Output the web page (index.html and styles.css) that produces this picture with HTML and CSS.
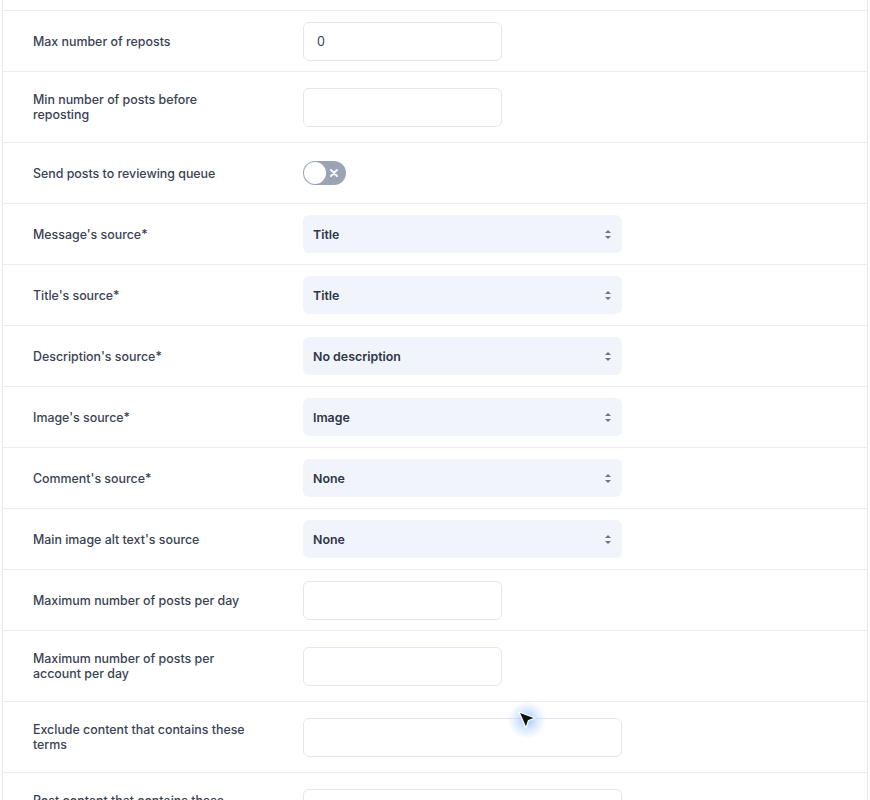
FILE: index.html
```html
<!DOCTYPE html>
<html>
<head>
<meta charset="utf-8">
<link rel="stylesheet" href="styles.css">
</head>
<body>
<div class="page">
  <div class="card">
    <div class="row-stub"></div>
    <div class="row">
      <div class="label">Max number of reposts</div>
      <div class="input">0</div>
    </div>
    <div class="row">
      <div class="label">Min number of posts before reposting</div>
      <div class="input"></div>
    </div>
    <div class="row">
      <div class="label">Send posts to reviewing queue</div>
      <div class="toggle"><span class="knob"></span>
        <svg class="x" width="8" height="8" viewBox="0 0 8 8"><path d="M1 1 L7 7 M7 1 L1 7" stroke="#fff" stroke-width="1.8" stroke-linecap="round"/></svg>
      </div>
    </div>
    <div class="row">
      <div class="label">Message's source*</div>
      <div class="select">Title<span class="arrows"></span></div>
    </div>
    <div class="row">
      <div class="label">Title's source*</div>
      <div class="select">Title<span class="arrows"></span></div>
    </div>
    <div class="row">
      <div class="label">Description's source*</div>
      <div class="select">No description<span class="arrows"></span></div>
    </div>
    <div class="row">
      <div class="label">Image's source*</div>
      <div class="select">Image<span class="arrows"></span></div>
    </div>
    <div class="row">
      <div class="label">Comment's source*</div>
      <div class="select">None<span class="arrows"></span></div>
    </div>
    <div class="row">
      <div class="label">Main image alt text's source</div>
      <div class="select">None<span class="arrows"></span></div>
    </div>
    <div class="row">
      <div class="label">Maximum number of posts per day</div>
      <div class="input"></div>
    </div>
    <div class="row">
      <div class="label">Maximum number of posts per account per day</div>
      <div class="input"></div>
    </div>
    <div class="row">
      <div class="label">Exclude content that contains these terms</div>
      <div class="input wide"></div>
    </div>
    <div class="row">
      <div class="label">Post content that contains these terms</div>
      <div class="input wide"></div>
    </div>
  </div>
  <svg class="cursor" width="40" height="40" viewBox="0 0 40 40">
    <defs>
      <radialGradient id="glow">
        <stop offset="0" stop-color="#7db4ff" stop-opacity="0.75"/>
        <stop offset="0.6" stop-color="#9cc7ff" stop-opacity="0.3"/>
        <stop offset="1" stop-color="#9cc7ff" stop-opacity="0"/>
      </radialGradient>
    </defs>
    <circle cx="19" cy="19" r="19" fill="url(#glow)"/>
    <path d="M11 11 L27 17 L20.5 19.5 L18 27 Z" fill="#111" stroke="#fff" stroke-width="1.2" stroke-linejoin="round"/>
  </svg>
</div>
</body>
</html>
```
FILE: styles.css
```css
* { box-sizing: border-box; }
html, body { margin: 0; padding: 0; background: #fff; }
body {
  font-family: Inter, "Noto Sans", sans-serif;
  color: #374151;
  overflow: hidden;
}
.page {
  position: relative;
  padding-left: 2px;
  width: 870px;
}
.card {
  width: 866px;
  border-left: 1px solid #e4e8f3;
  border-right: 1px solid #e4e8f3;
  background: #fff;
}
.row-stub {
  height: 11px;
  border-bottom: 1px solid #e9ecf1;
}
.row {
  display: flex;
  align-items: center;
  min-height: 61px;
  padding-left: 30px;
  border-bottom: 1px solid #e9ecf1;
}
.label {
  width: 220px;
  margin-right: 50px;
  padding: 20px 0;
  font-size: 12.4px;
  line-height: 15px;
  font-weight: 500;
  color: #3a4252;
}
.input {
  width: 199px;
  height: 39px;
  border: 1px solid #e2e7ee;
  border-radius: 6px;
  background: #fff;
  font-size: 12.5px;
  color: #374151;
  padding-left: 13px;
  display: flex;
  align-items: center;
}
.input.wide { width: 319px; }
.select {
  width: 319px;
  height: 38px;
  border-radius: 6px;
  background: #f1f5fb;
  font-size: 12.4px;
  font-weight: 600;
  color: #2d3646;
  padding-left: 10px;
  display: flex;
  align-items: center;
  position: relative;
}
.arrows {
  position: absolute;
  right: 11px;
  top: 50%;
  width: 6px;
  height: 9px;
  margin-top: -4px;
}
.arrows::before, .arrows::after {
  content: "";
  position: absolute;
  left: 0;
  border-left: 3px solid transparent;
  border-right: 3px solid transparent;
}
.arrows::before { top: 0; border-bottom: 3.5px solid #6b7384; }
.arrows::after { bottom: 0; border-top: 3.5px solid #6b7384; }
.toggle {
  width: 43px;
  height: 24px;
  border-radius: 12px;
  background: #9ba4b4;
  position: relative;
}
.knob {
  position: absolute;
  left: 1px;
  top: 1px;
  width: 22px;
  height: 22px;
  border-radius: 50%;
  background: #fff;
}
.x {
  position: absolute;
  right: 8px;
  top: 8px;
}
.cursor {
  position: absolute;
  left: 508px;
  top: 701px;
}
```
